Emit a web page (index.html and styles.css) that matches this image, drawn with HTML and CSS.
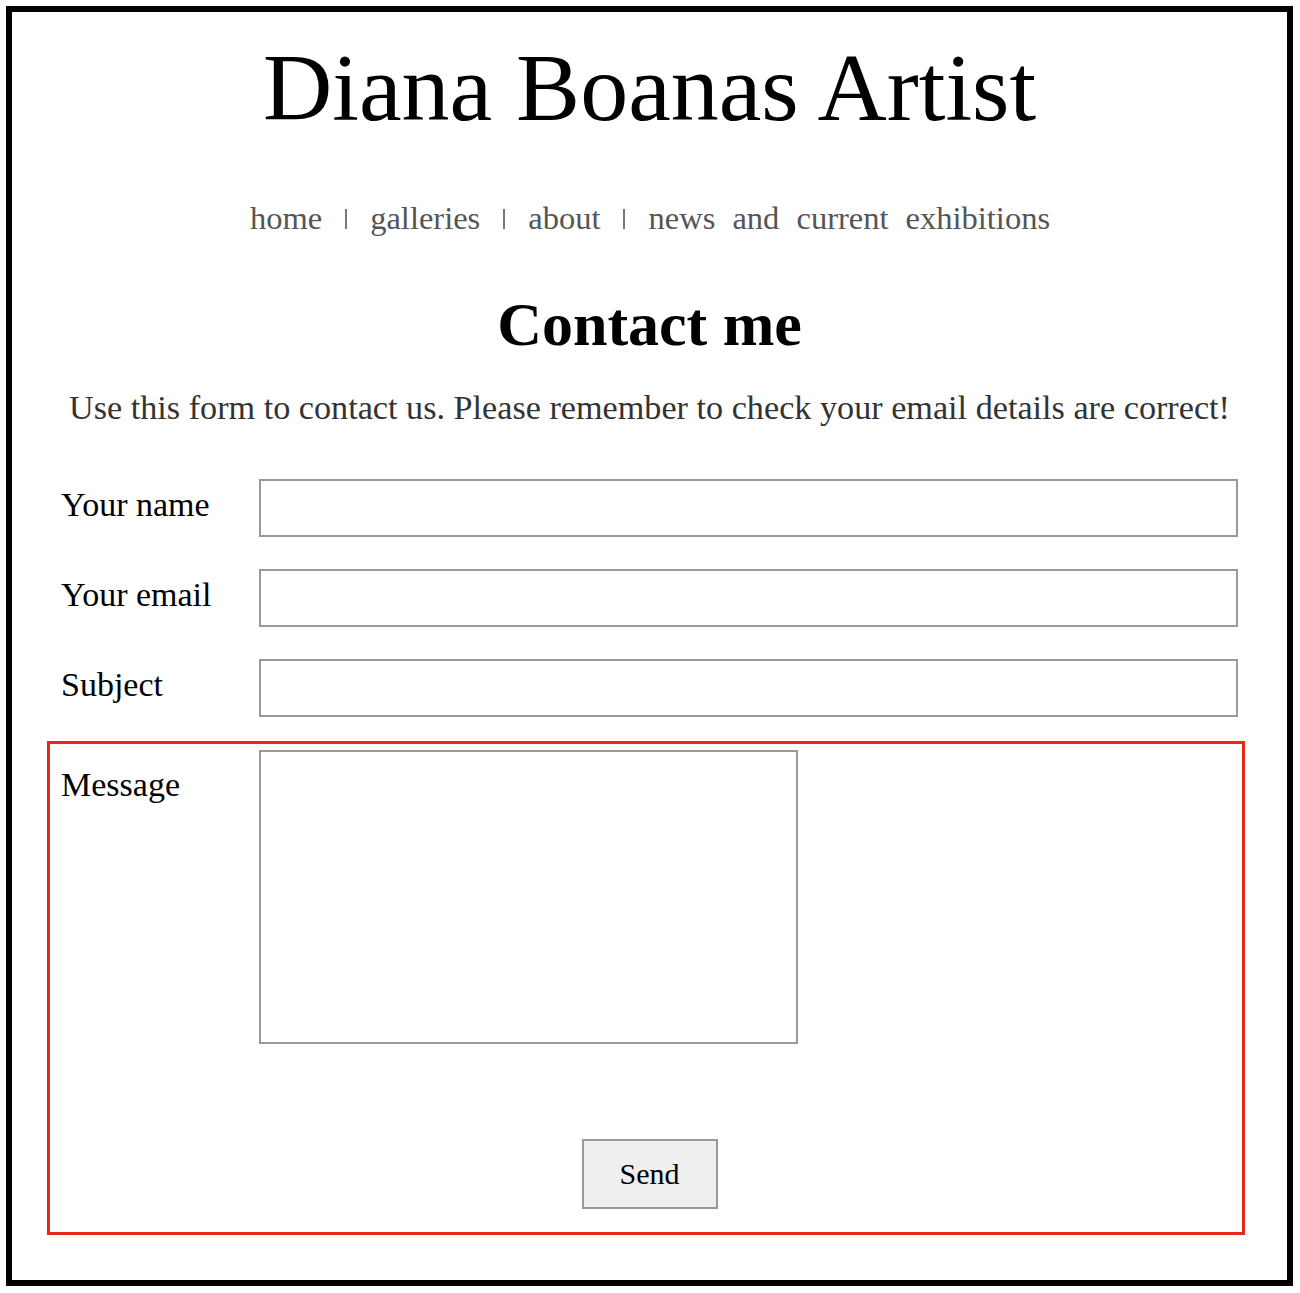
FILE: index.html
```html
<!DOCTYPE html>
<html lang="en">
<head>
<meta charset="utf-8">
<title>Contact me - Diana Boanas Artist</title>
<link rel="stylesheet" href="styles.css">
</head>
<body>
<div class="page">
  <h1 class="site-title">Diana Boanas Artist</h1>
  <nav class="nav">
    <a href="#">home</a><span class="sep"></span>
    <a href="#">galleries</a><span class="sep"></span>
    <a href="#">about</a><span class="sep"></span>
    <a href="#">news and current exhibitions</a>
  </nav>
  <h2 class="heading">Contact me</h2>
  <p class="intro">Use this form to contact us. Please remember to check your email details are correct!</p>
  <form class="form">
    <div class="row">
      <label class="label" for="name">Your name</label>
      <input class="field" id="name" type="text">
    </div>
    <div class="row">
      <label class="label" for="email">Your email</label>
      <input class="field" id="email" type="text">
    </div>
    <div class="row">
      <label class="label" for="subject">Subject</label>
      <input class="field" id="subject" type="text">
    </div>
    <div class="message-block">
      <div class="msg-row">
        <label class="label msg-label" for="message">Message</label>
        <textarea class="textarea" id="message"></textarea>
      </div>
      <div class="send-row">
        <button type="button" class="send">Send</button>
      </div>
    </div>
  </form>
</div>
</body>
</html>
```

FILE: styles.css
```css
html, body {
  margin: 0;
  padding: 0;
  background: #fff;
}

body {
  font-family: "Liberation Serif", "DejaVu Serif", serif;
  color: #000;
}

.page {
  margin: 6px 7px 7px 6px;
  border: 6px solid #000;
  height: 1268px;
  box-sizing: content-box;
}

.site-title {
  margin: 0;
  padding-top: 21px;
  font-size: 96px;
  line-height: 110px;
  font-weight: normal;
  text-align: center;
}

.nav {
  margin-top: 57px;
  display: flex;
  justify-content: center;
  align-items: center;
  font-size: 32.5px;
  line-height: 36px;
  color: #555;
  word-spacing: 9px;
  padding-left: 1px;
}

.nav a {
  color: #555;
  text-decoration: none;
}

.sep {
  display: block;
  width: 2px;
  height: 20px;
  background: #777;
  margin: 2px 23px 0 23px;
}

.heading {
  margin: 52px 0 0;
  font-size: 62px;
  line-height: 72px;
  text-align: center;
  font-weight: bold;
}

.intro {
  margin: 30px 0 0;
  font-size: 34.2px;
  line-height: 36px;
  text-align: center;
  color: #333;
}

.form {
  margin: 53px 0 0 35px;
  width: 1198px;
}

.row {
  display: grid;
  grid-template-columns: 198px 979px;
  padding-left: 14px;
  margin-bottom: 32px;
}

.label {
  font-size: 34px;
  line-height: 36px;
  padding-top: 8px;
}

.field {
  box-sizing: border-box;
  height: 58px;
  width: 979px;
  border: 2px solid #999;
  margin: 0;
  padding: 0 8px;
  font: inherit;
}

.message-block {
  border: 3px solid #e8261a;
  margin-top: -8px;
  padding: 6px 0 23px 11px;
}

.msg-row {
  display: grid;
  grid-template-columns: 198px 538px;
}

.msg-label {
  padding-top: 17px;
}

.textarea {
  box-sizing: border-box;
  width: 539px;
  height: 294px;
  border: 2px solid #999;
  margin: 0;
  resize: none;
  display: block;
}

.send-row {
  margin-top: 95px;
  display: flex;
  justify-content: center;
  padding-right: 4px;
}

.send {
  box-sizing: border-box;
  width: 136px;
  height: 70px;
  background: #efefef;
  border: 2px solid #999;
  font-family: "Liberation Serif", serif;
  font-size: 30px;
  color: #000;
  padding: 0;
}
```
